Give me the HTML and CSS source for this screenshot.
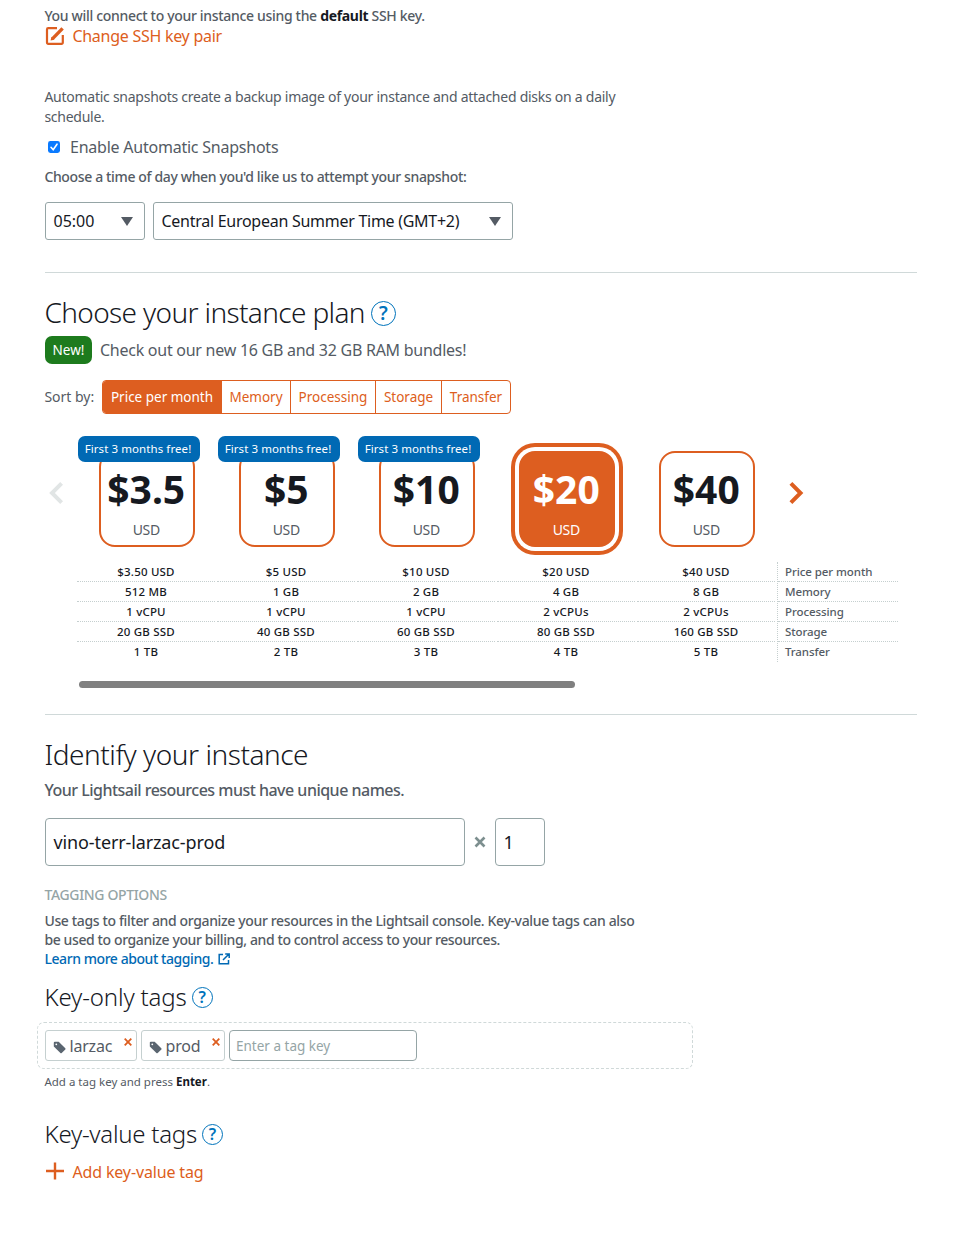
FILE: index.html
```html
<!DOCTYPE html>
<html lang="en">
<head>
<meta charset="utf-8">
<title>Create an instance</title>
<link rel="stylesheet" href="styles.css">
</head>
<body>
<main class="page">
  <section class="ssh">
    <p class="small medium t-ssh">You will connect to your instance using the <b>default</b> SSH key.</p>
    <a class="action">
      <svg width="20" height="20" viewBox="0 0 20 20" fill="none" stroke="currentColor"><path d="M12 2.2H3.2a1.2 1.2 0 0 0-1.2 1.2v13.2a1.2 1.2 0 0 0 1.2 1.2h13.4a1.2 1.2 0 0 0 1.2-1.2V9" stroke-width="2.2"/><path d="M7.6 12.6 17.6 2.4" stroke-width="3.4"/><path d="M5.600 14.6l.8-3.800 3 3z" fill="currentColor" stroke="none"/></svg>
      <span class="t-change">Change SSH key pair</span>
    </a>
  </section>

  <section class="snapshots">
    <p class="small t-auto">Automatic snapshots create a backup image of your instance and attached disks on a daily<br>schedule.</p>
    <label class="check">
      <svg width="12" height="12" viewBox="0 0 12 12"><rect width="12" height="12" rx="2.4" fill="#0a7aff"/><path d="M3 6.3l2.2 2.4L9 3.2" fill="none" stroke="#fff" stroke-width="1.6" stroke-linecap="round"/></svg>
      <span class="t-enable">Enable Automatic Snapshots</span>
    </label>
    <p class="small medium t-choose">Choose a time of day when you'd like us to attempt your snapshot:</p>
    <div class="selects">
      <div class="select select-time"><span class="t-time">05:00</span><i class="caret"></i></div>
      <div class="select select-zone"><span class="t-zone">Central European Summer Time (GMT+2)</span><i class="caret"></i></div>
    </div>
  </section>

  <section class="plan">
    <h1><span class="t-h1a">Choose your instance plan</span><span class="help">?</span></h1>
    <div class="news"><span class="new">New!</span><span class="t-news">Check out our new 16 GB and 32 GB RAM bundles!</span></div>
    <div class="sort">
      <span class="small t-sort">Sort by:</span>
      <div class="tabs"><span class="tab tab-price on">Price per month</span><span class="tab tab-memory">Memory</span><span class="tab tab-proc">Processing</span><span class="tab tab-storage">Storage</span><span class="tab tab-transfer">Transfer</span></div>
    </div>
    <div class="carousel">
      <svg class="prev" width="16" height="24" viewBox="0 0 16 24"><path d="M13.600 2.400 4 12l9.600 9.600" fill="none" stroke="#e1e5e5" stroke-width="4"/></svg>
      <div class="cards">
        <div class="slot"><div class="card"><strong>$3.5</strong><span>USD</span></div><em>First 3 months free!</em></div>
        <div class="slot"><div class="card"><strong>$5</strong><span>USD</span></div><em>First 3 months free!</em></div>
        <div class="slot"><div class="card"><strong>$10</strong><span>USD</span></div><em>First 3 months free!</em></div>
        <div class="slot"><div class="card chosen"><strong>$20</strong><span>USD</span></div></div>
        <div class="slot"><div class="card"><strong>$40</strong><span>USD</span></div></div>
      </div>
      <svg class="next" width="16" height="24" viewBox="0 0 16 24"><path d="M2.900 2.400 12.500 12 2.900 21.600" fill="none" stroke="#dd5e20" stroke-width="4"/></svg>
    </div>
    <div class="specs">
      <ul><li>$3.50 USD</li><li>512 MB</li><li>1 vCPU</li><li>20 GB SSD</li><li>1 TB</li></ul>
      <ul><li>$5 USD</li><li>1 GB</li><li>1 vCPU</li><li>40 GB SSD</li><li>2 TB</li></ul>
      <ul><li>$10 USD</li><li>2 GB</li><li>1 vCPU</li><li>60 GB SSD</li><li>3 TB</li></ul>
      <ul><li>$20 USD</li><li>4 GB</li><li>2 vCPUs</li><li>80 GB SSD</li><li>4 TB</li></ul>
      <ul><li>$40 USD</li><li>8 GB</li><li>2 vCPUs</li><li>160 GB SSD</li><li>5 TB</li></ul>
      <ul class="labels"><li>Price per month</li><li>Memory</li><li>Processing</li><li>Storage</li><li>Transfer</li></ul>
    </div>
    <div class="scrollbar"></div>
  </section>

  <section class="identify">
    <h1><span class="t-h1b">Identify your instance</span></h1>
    <p class="lead t-lead">Your Lightsail resources must have unique names.</p>
    <div class="names">
      <div class="field name"><span class="t-name">vino-terr-larzac-prod</span></div>
      <svg class="times" width="12" height="12" viewBox="0 0 12 12"><path d="M1.500 1.500l9 9M10.500 1.500l-9 9" stroke="#7d8f8f" stroke-width="2.600"/></svg>
      <div class="field count">1</div>
    </div>
    <h3>TAGGING OPTIONS</h3>
    <p class="tagging"><span class="t-tag1">Use tags to filter and organize your resources in the Lightsail console. Key-value tags can also</span><br><span class="t-tag2">be used to organize your billing, and to control access to your resources.</span><br><a><span class="t-learn">Learn more about tagging.</span><svg width="12" height="12" viewBox="0 0 12 12" fill="none" stroke="currentColor" stroke-width="1.500"><path d="M5 1.500H1.200v9.300h9.300V7M7.200.9h4v4M11 1 5 7"/></svg></a></p>
    <h2><span class="t-h2a">Key-only tags</span><span class="help help-sm">?</span></h2>
    <div class="tagbox">
      <span class="chip chip-a"><svg class="tagicon" width="13" height="13" viewBox="0 0 13 13"><path d="M.8 1.800Q.8.8 1.800.8h3.900L12.300 7.200q.6.7 0 1.300L8.700 12q-.7.6-1.300 0L.8 5.400z" fill="#5a6570"/><circle cx="3.300" cy="3.300" r=".9" fill="#fff"/></svg><span>larzac</span><svg class="del" width="8" height="8" viewBox="0 0 8 8"><path d="M.7.7l6.600 6.600M7.300.7.7 7.300" stroke="#dd5e20" stroke-width="1.800"/></svg></span>
      <span class="chip chip-b"><svg class="tagicon" width="13" height="13" viewBox="0 0 13 13"><path d="M.8 1.800Q.8.8 1.800.8h3.900L12.300 7.200q.6.7 0 1.300L8.700 12q-.7.6-1.300 0L.8 5.400z" fill="#5a6570"/><circle cx="3.300" cy="3.300" r=".9" fill="#fff"/></svg><span>prod</span><svg class="del" width="8" height="8" viewBox="0 0 8 8"><path d="M.7.7l6.600 6.600M7.300.7.7 7.300" stroke="#dd5e20" stroke-width="1.800"/></svg></span>
      <span class="taginput">Enter a tag key</span>
    </div>
    <p class="note">Add a tag key and press <b>Enter</b>.</p>
    <h2 class="kv"><span class="t-h2b">Key-value tags</span><span class="help help-sm">?</span></h2>
    <a class="action add">
      <svg width="20" height="20" viewBox="0 0 20 20"><path d="M10 .5v17M1 9h18" stroke="currentColor" stroke-width="2.400"/></svg>
      <span class="t-add">Add key-value tag</span>
    </a>
  </section>
</main>
</body>
</html>
```
FILE: styles.css
```css
* { box-sizing: border-box; margin: 0; padding: 0; }
body { background: #fff; color: #545b64; font: 16px/20px "Noto Sans", "Open Sans", sans-serif; white-space: nowrap; }
.page { width: 872px; margin-left: 45px; padding-top: 6px; }
b { color: #16191f; font-weight: 700; }
.small { font-size: 14px; line-height: 20px; margin-left: -0.600px; }
.medium { font-weight: 500; }
.action { display: flex; align-items: center; height: 20px; gap: 7.400px; color: #dd5e20; }

.t-ssh { letter-spacing: -0.32px; }
.t-change { letter-spacing: -0.27px; }
.t-auto { letter-spacing: -0.26px; }
.t-enable { letter-spacing: -0.23px; }
.t-choose { letter-spacing: -0.36px; }
.t-zone { letter-spacing: -0.27px; }
.t-h1a { letter-spacing: -0.64px; }
.t-h1b { letter-spacing: -0.46px; }
.t-news { letter-spacing: -0.26px; }
.t-lead { letter-spacing: -0.51px; }
.t-name { letter-spacing: -0.12px; }
.t-tag1 { letter-spacing: -0.36px; }
.t-tag2 { letter-spacing: -0.39px; }
.t-learn { letter-spacing: -0.43px; }
.t-h2a { letter-spacing: -0.15px; }
.t-h2b { letter-spacing: -0.26px; }
.t-add { letter-spacing: -0.14px; }

.ssh { height: 81px; }
.snapshots { height: 186px; border-bottom: 1px solid #d0d9d9; }
.check { display: flex; align-items: center; height: 20px; margin: 10px 0; padding-left: 3px; gap: 10px; }
.selects { display: flex; gap: 8px; margin-top: 15px; }
.select { display: flex; align-items: center; justify-content: space-between; height: 38px; padding: 0 11px 0 7.500px; border: 1px solid #95a5a6; border-radius: 3px; color: #16191f; }
.select-time { width: 100px; }
.select-zone { width: 360px; }
.caret { border: 6px solid transparent; border-top: 9px solid #545b64; border-bottom: 0; }

.plan { height: 442px; padding-top: 20px; border-bottom: 1px solid #d0d9d9; }
h1 { display: flex; align-items: center; height: 40px; margin-left: -0.500px; padding-bottom: 2px; font-size: 28px; font-weight: 300; color: #16191f; }
h1 .help { margin-top: 2px; }
h2 { display: flex; align-items: center; height: 30px; margin-left: -0.500px; font-size: 24px; font-weight: 300; color: #16191f; }
.help { width: 25px; height: 25px; margin-left: 6px; border: 1.400px solid #0073bb; border-radius: 50%; color: #0073bb; font-size: 19px; line-height: 23px; font-weight: 600; letter-spacing: 0; text-align: center; }
.help-sm { width: 21px; height: 21px; margin-left: 5px; font-size: 16px; line-height: 19px; }
.news { display: flex; align-items: center; gap: 8px; margin-top: 3px; }
.new { width: 47px; height: 28px; border-radius: 7px; background: #1d7b1d; color: #fff; font-size: 13.500px; line-height: 28px; text-align: center; }
.sort { display: flex; align-items: center; gap: 8px; height: 34px; margin-top: 16px; }
.t-sort { width: 49.600px; }
.tabs { display: flex; height: 34px; border: 1px solid #dd5e20; border-radius: 4px; overflow: hidden; }
.tab { border-left: 1px solid #dd5e20; color: #dd5e20; font-size: 13.500px; line-height: 32px; text-align: center; }
.tab.on { border-left: 0; background: #dd5e20; color: #fff; }
.tab-price { width: 118px; }
.tab-memory { width: 69px; }
.tab-proc { width: 85px; }
.tab-storage { width: 66px; }
.tab-transfer { width: 69px; }

.carousel { display: flex; margin-top: 37px; height: 96px; }
.prev { margin: 30px 14px 0 3px; }
.next { margin: 30px 0 0 10px; }
.cards { display: flex; }
.slot { position: relative; width: 140px; padding-left: 21px; }
.slot em { position: absolute; left: 0; top: -15px; width: 122px; height: 26px; padding-right: 2px; border-radius: 7px; background: #0069b4; color: #fff; font-size: 11.500px; font-style: normal; line-height: 26px; letter-spacing: 0.08px; text-align: center; }
.card { display: flex; flex-direction: column; align-items: center; width: 96px; height: 96px; padding-right: 1.500px; border: 2px solid #dd5e20; border-radius: 16px; }
.card strong { margin-top: 11px; height: 50px; color: #16191f; font-size: 39px; line-height: 50px; }
.card span { height: 20px; margin-top: 6px; font-size: 14px; letter-spacing: -0.4px; }
.card.chosen { background: #dd5e20; box-shadow: 0 0 0 4px #fff, 0 0 0 8px #dd5e20; }
.chosen strong, .chosen span { color: #fff; }

.specs { display: flex; margin: 15px 0 0 32px; font-size: 11.500px; }
.specs ul { width: 140px; list-style: none; color: #16191f; font-weight: 500; letter-spacing: 0.2px; text-align: center; }
.specs li { height: 20px; margin-right: 2px; border-bottom: 1px dotted #c5cfcf; line-height: 20px; }
.specs li:last-child { border-bottom: 0; }
.specs .labels { width: 121px; border-left: 1px dotted #c5cfcf; color: #545b64; letter-spacing: -0.08px; text-align: left; }
.specs .labels li { margin-right: 0; padding-left: 7px; }
.scrollbar { width: 496px; height: 7px; margin: 19px 0 0 34px; border-radius: 4px; background: #808080; }

.identify { padding-top: 20px; }
.lead { margin: 5px 0 18px -0.600px; font-weight: 500; }
.names { display: flex; align-items: center; }
.field { height: 48px; padding-left: 7.500px; border: 1px solid #95a5a6; border-radius: 4px; color: #16191f; font-size: 18px; line-height: 46px; }
.name { width: 420px; }
.times { margin: 0 9px; }
.count { width: 50px; }
h3 { margin: 19px 0 6px -0.600px; color: #95a5a6; font-size: 14px; font-weight: 500; line-height: 20px; letter-spacing: -0.35px; }
.tagging { height: 58px; margin-left: -0.600px; font-size: 14px; font-weight: 500; line-height: 19px; }
.tagging a { display: inline-flex; align-items: center; gap: 5px; color: #0069b4; }
h2 { margin-top: 13px; }
.tagbox { display: flex; gap: 4px; width: 656px; height: 47px; margin: 10px 0 0 -8px; padding: 7px; border: 1px dashed #d0d9d9; border-radius: 7px; }
.chip { display: flex; height: 31px; border: 1px solid #c5d0d0; border-radius: 3px; line-height: 31px; letter-spacing: -0.2px; }
.tagicon { margin: 10px 3.500px 0 7px; }
.chip-a { width: 92px; }
.chip-b { width: 84px; }
.del { margin: 7px 4px 0 auto; }
.taginput { width: 188px; height: 31px; padding-left: 6px; border: 1px solid #95a5a6; border-radius: 4px; color: #95a5a6; font-size: 13.500px; line-height: 30px; }
.note { margin: 3px 0 0 -0.600px; font-size: 11.500px; }
.kv { margin-top: 27px; }
.add { margin-top: 13px; }
```
